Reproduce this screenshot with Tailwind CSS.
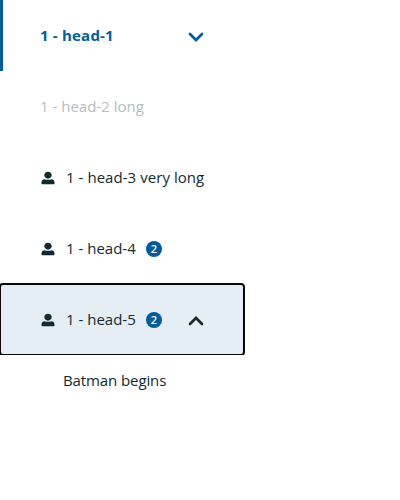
<!DOCTYPE html>
<html lang="en"><head><meta charset="utf-8"><title>Menu</title>
<script src="https://cdn.jsdelivr.net/npm/@tailwindcss/browser@4"></script></head>
<body class="bg-white font-['Open_Sans',sans-serif] text-[15px] leading-5 text-[#132a31]">
<svg class="hidden"><symbol id="person" viewBox="0 0 14 14"><path d="M7 .7c2.100 0 3.700 1.400 3.700 3.400S9.100 7.700 7 7.700 3.300 6.100 3.300 4.100 4.900.7 7 .7zM3.500 8.200c2 .8 5 .8 7 0 1.900.2 3 1.300 3 3.100v1c0 .6-.4 1-1 1H1.500c-.6 0-1-.4-1-1v-1c0-1.800 1.100-2.900 3-3.100z" fill="currentColor"/></symbol></svg>
<nav class="w-[244px]">
<div class="flex h-[71px] items-center border-l-[3px] border-[#005c9e] pl-[37px] pr-10 pb-px font-bold text-[#005c9e]"><span class="flex-1 whitespace-nowrap tracking-[0.2px]">1 - head-1</span><svg class="mt-[3px] h-4 w-4" viewBox="0 0 16 16" fill="none" stroke="currentColor" stroke-width="2.700" stroke-linecap="round"><path d="M2 5l6 6 6-6"/></svg></div>
<div class="flex h-[71px] items-center pb-0.5 pl-10 text-[#b6bdc0]">1 - head-2 long</div>
<div class="flex h-[71px] items-center whitespace-nowrap pl-[41px]"><svg class="mr-[11px] h-3.5 w-3.5"><use href="#person"/></svg><span class="pb-0.5 tracking-[0.05px]">1 - head-3 very long</span></div>
<div class="flex h-[71px] items-center pl-[41px]"><svg class="mr-[11px] h-3.5 w-3.5"><use href="#person"/></svg><span class="w-20 pb-0.5">1 - head-4</span><span class="flex h-4 w-4 items-center justify-center rounded-full bg-[#005c9e] text-[11px] font-semibold text-white">2</span></div>
<div class="flex h-[71px] items-center rounded-[3px] bg-[#e5edf5] pl-[41px] pr-10 outline-2 -outline-offset-1 outline-[#080808]"><svg class="mr-[11px] h-3.5 w-3.5"><use href="#person"/></svg><span class="w-20 pb-0.5">1 - head-5</span><span class="flex h-4 w-4 items-center justify-center rounded-full bg-[#005c9e] text-[11px] font-semibold text-white">2</span><svg class="ml-auto mt-0.5 h-4 w-4" viewBox="0 0 16 16" fill="none" stroke="currentColor" stroke-width="2.700" stroke-linecap="round"><path d="M2 11l6-6 6 6"/></svg></div>
<div class="relative flex h-[51px] items-center bg-white pb-0.5 pl-[63px] tracking-[-0.1px]">Batman begins</div>
</nav></body></html>
